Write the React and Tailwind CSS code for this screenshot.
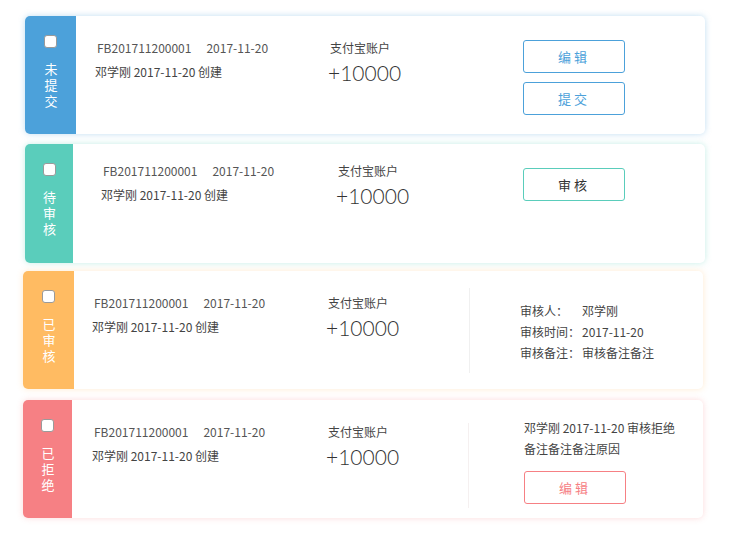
const font = { fontFamily: '"Noto Sans CJK SC", "Noto Sans", sans-serif' };
const amountFont = { fontFamily: 'Lato, "Noto Sans CJK SC", sans-serif' };

function Checkbox() {
  return <div className="h-[13px] w-[13px] rounded-[3px] border border-[#9a9a9a] bg-white" />;
}

function StatusBar({ label, className }) {
  return (
    <div className={`flex flex-shrink-0 flex-col items-center rounded-l-[5px] pt-[19px] ${className}`}>
      <Checkbox />
      <div className="mt-[15px] text-[13px] leading-[16px] tracking-[3px] text-white [writing-mode:vertical-rl]">
        {label}
      </div>
    </div>
  );
}

function Summary({ className }) {
  return (
    <div className={`flex-shrink-0 ${className}`}>
      <p className="pl-[2px] text-[12px] leading-[16px] text-[#555]">
        FB201711200001<span className="ml-[15px]">2017-11-20</span>
      </p>
      <p className="mt-[8px] text-[12px] leading-[16px] text-[#444]">邓学刚 2017-11-20 创建</p>
    </div>
  );
}

function Amount({ className }) {
  return (
    <div className={`flex-shrink-0 ${className}`}>
      <p className="pl-[2px] text-[12px] leading-[16px] text-[#444]">支付宝账户</p>
      <p className="mt-[3px] text-[21px] font-light leading-[28px] text-[#333]" style={amountFont}>+10000</p>
    </div>
  );
}

export default function App() {
  return (
    <div className="h-[535px] w-[730px] bg-white pt-[16px]" style={font}>
      {/* 未提交 */}
      <div className="ml-[25px] flex h-[118px] w-[680px] rounded-[5px] bg-white shadow-[0_0_6px_rgba(76,161,218,0.35)]">
        <StatusBar label="未提交" className="w-[51px] bg-[#4ca1da]" />
        <Summary className="w-[252px] pl-[19px] pt-[24px]" />
        <Amount className="w-[195px] pt-[24px]" />
        <div className="flex flex-col gap-[9px] pt-[24px]">
          <button className="h-[33px] w-[102px] rounded-[3px] border border-[#4ca1da] text-[13px] tracking-[3px] text-[#4ca1da]">编辑</button>
          <button className="h-[33px] w-[102px] rounded-[3px] border border-[#4ca1da] text-[13px] tracking-[3px] text-[#4ca1da]">提交</button>
        </div>
      </div>

      {/* 待审核 */}
      <div className="ml-[25px] mt-[10px] flex h-[119px] w-[680px] rounded-[5px] bg-white shadow-[0_0_6px_rgba(90,205,187,0.35)]">
        <StatusBar label="待审核" className="w-[48px] bg-[#5acdbb]" />
        <Summary className="w-[263px] pl-[28px] pt-[19px]" />
        <Amount className="w-[187px] pt-[19px]" />
        <div className="pt-[24px]">
          <button className="h-[33px] w-[102px] rounded-[3px] border border-[#5acdbb] text-[13px] tracking-[3px] text-[#333]">审核</button>
        </div>
      </div>

      {/* 已审核 */}
      <div className="ml-[23px] mt-[8px] flex h-[118px] w-[680px] rounded-[5px] bg-white shadow-[0_0_6px_rgba(255,187,98,0.3)]">
        <StatusBar label="已审核" className="w-[51px] bg-[#ffbb62]" />
        <Summary className="w-[252px] pl-[18px] pt-[24px]" />
        <Amount className="w-[143px] pt-[24px]" />
        <div className="mt-[17px] h-[85px] w-px bg-[#f0f0f0]" />
        <div className="pl-[50px] pt-[29px] text-[12px] leading-[21px] text-[#444]">
          <div className="flex"><span className="w-[62px]">审核人：</span><span>邓学刚</span></div>
          <div className="flex"><span className="w-[62px]">审核时间：</span><span>2017-11-20</span></div>
          <div className="flex"><span className="w-[62px]">审核备注：</span><span>审核备注备注</span></div>
        </div>
      </div>

      {/* 已拒绝 */}
      <div className="ml-[23px] mt-[11px] flex h-[118px] w-[680px] rounded-[5px] bg-white shadow-[0_0_6px_rgba(246,128,132,0.3)]">
        <StatusBar label="已拒绝" className="w-[49px] bg-[#f68084]" />
        <Summary className="w-[254px] pl-[20px] pt-[24px]" />
        <Amount className="w-[142px] pt-[24px]" />
        <div className="mt-[23px] h-[85px] w-px bg-[#f5f0f0]" />
        <div className="pl-[55px] pt-[17px]">
          <p className="text-[12px] leading-[21px] text-[#444]">邓学刚 2017-11-20 审核拒绝</p>
          <p className="text-[12px] leading-[21px] text-[#444]">备注备注备注原因</p>
          <button className="mt-[12px] h-[33px] w-[102px] rounded-[3px] border border-[#f68084] text-[13px] tracking-[3px] text-[#f68084]">编辑</button>
        </div>
      </div>
    </div>
  );
}
